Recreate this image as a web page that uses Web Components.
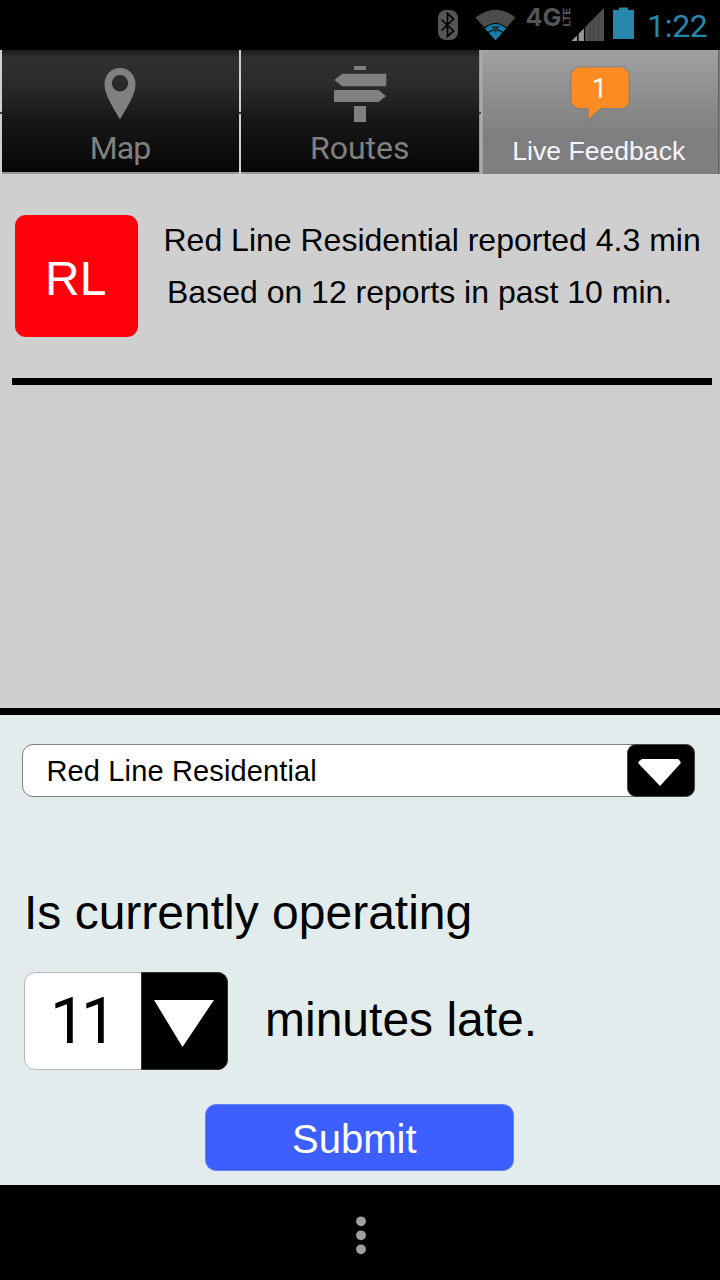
<!DOCTYPE html>
<html lang="en">
<head>
<meta charset="utf-8">
<title>Live Feedback</title>
<style>
html, body { margin: 0; background: #000; }
body { width: 720px; height: 1280px; overflow: hidden; font-family: "Liberation Sans", Arial, sans-serif; color: #000; }
</style>
</head>
<body>
<feedback-app></feedback-app>
<script>
function define(name, markup) {
  const template = document.createElement('template');
  template.innerHTML = markup;
  customElements.define(name, class extends HTMLElement {
    constructor() {
      super();
      this.attachShadow({ mode: 'open' }).append(template.content.cloneNode(true));
    }
  });
}

define('status-bar', `
<style>
:host { display: flex; height: 50px; background: #000; align-items: flex-start; justify-content: flex-end; box-sizing: border-box; }
svg { display: block; flex: none; }
time { font: 400 32px/38px Roboto, sans-serif; letter-spacing: -.3px; color: #2887ad; width: 73px; box-sizing: border-box; padding: 7px 0 0 0; white-space: nowrap; }
</style>
<svg width="217" height="50" viewBox="430 0 217 50">
  <rect x="438" y="10" width="20" height="30" rx="8" fill="#555"/>
  <path d="M441.5 19.5l12 11.5-6 5.500V13.500l6 5.500-12 11.500" fill="none" stroke="#000" stroke-width="1.700"/>
  <path d="M475.500 17.500Q495.500 2 515.500 17.500L495.500 40.300Z" fill="#4c4c4c"/>
  <path d="M484.500 28Q495.500 19 506.500 28L495.500 40.300Z" fill="#147fa8"/>
  <path d="M484.500 28Q495.500 19 506.500 28M488 32.500Q495.500 27 503 32.500" fill="none" stroke="#000" stroke-width="1.200"/>
  <path d="M491 26h9l-4.500 7.500z" fill="#193e4b"/>
  <text x="525.500" y="26" font-family="Inter, sans-serif" font-size="24.500" font-weight="700" fill="#555" textLength="36" lengthAdjust="spacingAndGlyphs">4G</text>
  <text transform="translate(569.500 26.500) rotate(-90)" font-family="Roboto, sans-serif" font-size="9.500" fill="#666" stroke="#666" stroke-width=".3" textLength="18.500" lengthAdjust="spacingAndGlyphs">LTE</text>
  <path d="M604 8V41H571.500Z" fill="#505050"/>
  <path d="M571.500 41L577 35.500V41ZM579 41V33.500l5-5V41Z" fill="#999"/>
  <path d="M577.700 34v7M584.500 28v13" stroke="#000" stroke-width="1.200"/>
  <path d="M590 22v19M593.500 19v22M598.500 14v27" stroke="#464646" stroke-width="1.500"/>
  <path d="M613 10h6V7.500h9V10h6V39H613Z" fill="#2887ad"/>
</svg>
<time>1:22</time>
`);

define('nav-tab', `
<style>
:host { display: block; position: relative; box-sizing: border-box; height: 124px; text-align: center;
  background: linear-gradient(#1b1b1b 0, #303030 8px, #2b2b2b 34px, #1c1c1c 62px, #191919 66px, #070707 120px);
  border-bottom: 2px solid #979797; font: 400 32px/38px Roboto, sans-serif; color: #808080; }
:host([active]) { background: linear-gradient(#a0a0a0, #7e7e7e 88px, #808080); border-bottom-color: #808080;
  font: 26.600px/38px "Liberation Sans", Arial, sans-serif; color: #f6f4ff; }
.icon { display: block; height: 79px; }
.label { display: block; white-space: nowrap; }
:host([active]) .label { padding: 3px 3px 0 0; }
:host([tight]) .label { letter-spacing: -1px; }
</style>
<span class="icon"><slot name="icon"></slot></span>
<span class="label"><slot></slot></span>
`);

define('tab-bar', `
<style>
:host { display: grid; grid-template-columns: 1.500px 237px 2.500px 237.500px 4.500px 234.500px 2.500px; height: 124px; }
.seam { background: linear-gradient(transparent 62px, #3b3b3b 62px, #3b3b3b 64px, transparent 64px), #d0d0d0; }
.grey { background: linear-gradient(transparent 62px, #444 62px, #444 64px, transparent 64px) 0 0 / 2px 100% no-repeat, linear-gradient(90deg, #8d8d8d, #b2b2b2 2px, #999); }
.end { background: linear-gradient(90deg, #555, #8a8a8a); }
svg { display: block; margin: 0 auto; }
</style>
<span class="seam"></span>
<nav-tab tight>
  <svg slot="icon" width="60" height="79" viewBox="90 50 60 79"><path fill-rule="evenodd" fill="#808080" d="M120 68C111 68 104.500 75 104.500 84C104.500 95 113 107 120 119.500C127 107 135.500 95 135.500 84C135.500 75 129 68 120 68ZM120 75a8.200 8.200 0 1 1 0 16.400a8.200 8.200 0 1 1 0-16.400Z"/></svg>Map
</nav-tab>
<span class="seam"></span>
<nav-tab>
  <svg slot="icon" width="60" height="79" viewBox="330 50 60 79"><path fill="#808080" d="M354 66h12v4h-12zM334.300 80l8-6.300h44v12.600h-44zM334 90h44.500l7.500 6-7.500 6H334zM354 106h12v16h-12z"/></svg>Routes
</nav-tab>
<span class="grey"></span>
<nav-tab active>
  <svg slot="icon" width="80" height="79" viewBox="560 50 80 79">
    <path d="M577 67.500h46.500l5 5v31l-5 4.500H600.500L588.500 119V108H577l-5.500-5V73Z" fill="#ff8c22" stroke="#777" stroke-width="3" stroke-opacity=".45" paint-order="stroke" stroke-linejoin="round"/>
    <text x="591.500" y="98" font-family="Roboto, sans-serif" font-size="28.500" fill="#fff8f0">1</text>
  </svg>Live Feedback
</nav-tab>
<span class="end"></span>
`);

define('line-report', `
<style>
:host { display: grid; grid-template-columns: 123px 1fr; column-gap: 25.500px; margin: 0 8px 0 12px; padding: 41px 0 40.500px 3px; border-bottom: 7px solid #000; }
.badge { height: 122px; box-sizing: border-box; border-radius: 11px; background: #ff000c; color: #fff; font-size: 48px; line-height: 54px; padding: 37px 0 0 30px; }
.text { font-size: 32px; line-height: 52px; white-space: nowrap; margin-top: -1px; }
.text ::slotted(*), .text slot { display: block; }
.sub { padding-left: 3.500px; }
</style>
<div class="badge"><slot name="badge"></slot></div>
<div class="text"><div><slot></slot></div><div class="sub"><slot name="basis"></slot></div></div>
`);

define('feedback-list', `
<style>:host { display: block; height: 534px; background: #cfcfcf; border-bottom: 7px solid #000; }</style>
<slot></slot>
`);

define('line-select', `
<style>
:host { display: flex; width: 673px; height: 53px; box-sizing: border-box; border: 1.500px solid #808080; border-radius: 11px; background: #fff; }
.value { flex: 1; font-size: 29px; letter-spacing: .14px; line-height: 33px; padding: 10px 0 0 23.500px; white-space: nowrap; }
.arrow { width: 68px; margin: -1px; box-sizing: border-box; border: 1px solid #444; border-radius: 9px; background: #000; }
svg { display: block; }
</style>
<span class="value"><slot></slot></span>
<span class="arrow"><svg width="66" height="51" viewBox="628 745 66 51"><path d="M642 759h36l2.500 2.500v2L660 786l-21.500-22.500v-2z" fill="#fff"/></svg></span>
`);

define('minutes-select', `
<style>
:host { display: flex; width: 204px; height: 98px; box-sizing: border-box; border: 1.500px solid #b4b8b8; border-radius: 11px; background: #fff; }
.value { flex: 1; font: 400 64px/72px Roboto, sans-serif; letter-spacing: -5px; padding: 13px 0 0 25px; white-space: nowrap; }
.arrow { width: 87px; margin: -1px; border-radius: 0 10px 10px 0; box-sizing: border-box; border: 1px solid #333; background: #000; }
svg { display: block; }
</style>
<span class="value"><slot></slot></span>
<span class="arrow"><svg width="85" height="96" viewBox="142 973 85 96"><path d="M154 1000h60l-31.500 47z" fill="#fff"/></svg></span>
`);

define('submit-button', `
<style>
:host { display: block; width: 309px; height: 67px; box-sizing: border-box; border: 1px solid #6480f6; border-radius: 11px; background: #3d5fff; color: #fff; font-size: 40px; line-height: 46px; padding: 11px 0 0 86px; }
</style>
<slot></slot>
`);

define('report-form', `
<style>
:host { display: block; height: 470px; box-sizing: border-box; background: #e3eced; padding: 29px 0 0 22px; font-size: 48px; line-height: 54px; white-space: nowrap; }
.question { margin: 89px 0 0 2px; }
.delay { display: flex; margin: 32px 0 0 2px; }
.unit { padding: 21px 0 0 37px; }
.submit { margin: 34px 0 0 183px; }
</style>
<line-select>Red Line Residential</line-select>
<div class="question">Is currently operating</div>
<div class="delay"><minutes-select>11</minutes-select><span class="unit">minutes late.</span></div>
<div class="submit"><submit-button>Submit</submit-button></div>
`);

define('navigation-bar', `
<style>:host { display: flex; height: 95px; background: #000; } svg { display: block; margin: 0 auto; }</style>
<svg width="720" height="95" viewBox="0 1185 720 95" fill="#a0a0a0"><circle cx="361" cy="1221.300" r="4.900"/><circle cx="361" cy="1235.300" r="4.900"/><circle cx="361" cy="1249.300" r="4.900"/></svg>
`);

define('feedback-app', `
<style>:host { display: block; width: 720px; height: 1280px; }</style>
<status-bar></status-bar>
<tab-bar></tab-bar>
<feedback-list>
  <line-report><span slot="badge">RL</span>Red Line Residential reported 4.3 min<span slot="basis">Based on 12 reports in past 10 min.</span></line-report>
</feedback-list>
<report-form></report-form>
<navigation-bar></navigation-bar>
`);
</script>
</body>
</html>
